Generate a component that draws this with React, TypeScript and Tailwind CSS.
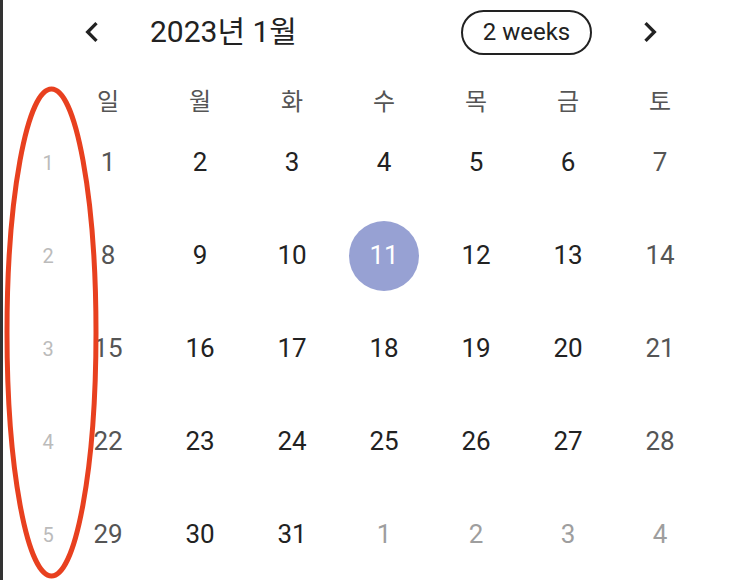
import React from "react";

const WEEKDAYS = ["일", "월", "화", "수", "목", "금", "토"];

type Day = { n: number; muted?: boolean };

const WEEKS: Day[][] = [
  [1, 2, 3, 4, 5, 6, 7].map((n) => ({ n })),
  [8, 9, 10, 11, 12, 13, 14].map((n) => ({ n })),
  [15, 16, 17, 18, 19, 20, 21].map((n) => ({ n })),
  [22, 23, 24, 25, 26, 27, 28].map((n) => ({ n })),
  [
    { n: 29 },
    { n: 30 },
    { n: 31 },
    { n: 1, muted: true },
    { n: 2, muted: true },
    { n: 3, muted: true },
    { n: 4, muted: true },
  ],
];

const SELECTED = 11;

function Chevron({ dir }: { dir: "left" | "right" }) {
  return (
    <svg width="40" height="40" viewBox="0 0 24 24" fill="#222">
      {dir === "left" ? (
        <path d="M15.41 7.41L14 6l-6 6 6 6 1.41-1.41L10.83 12z" />
      ) : (
        <path d="M8.59 16.59L10 18l6-6-6-6-1.41 1.41L13.17 12z" />
      )}
    </svg>
  );
}

export default function App() {
  return (
    <div
      className="relative w-[738px] h-[580px] overflow-hidden bg-white border-l-[3px] border-[#333]"
      style={{ fontFamily: 'Roboto, "Noto Sans CJK KR", sans-serif' }}
    >
      {/* header */}
      <div className="flex items-center h-[64px] pl-[69px] pr-[68px]">
        <div className="flex items-center justify-center w-[40px] h-[40px]">
          <Chevron dir="left" />
        </div>
        <div className="ml-[38px] text-[30px] text-[#222] leading-none">2023년 1월</div>
        <div className="flex-1" />
        <div className="flex items-center justify-center w-[131px] h-[45px] rounded-full border-2 border-[#222] text-[24px] text-[#222] leading-none">
          2 weeks
        </div>
        <div className="ml-[38px] flex items-center justify-center w-[40px] h-[40px]">
          <Chevron dir="right" />
        </div>
      </div>

      {/* weekday row */}
      <div className="flex h-[52px] pt-[24px] pl-[31px]">
        <div className="w-[28px]" />
        {WEEKDAYS.map((w) => (
          <div
            key={w}
            className="w-[92px] h-[28px] flex items-center justify-center text-[24px] text-[#555] leading-none"
          >
            {w}
          </div>
        ))}
      </div>

      {/* weeks */}
      {WEEKS.map((week, wi) => (
        <div key={wi} className="flex h-[93px] items-center pl-[31px]">
          <div className="w-[28px] text-center text-[20px] text-[#bbb]">{wi + 1}</div>
          {week.map((d, di) => {
            const isSel = !d.muted && d.n === SELECTED;
            const weekend = di === 0 || di === 6;
            const color = d.muted
              ? "text-[#9e9e9e]"
              : weekend
              ? "text-[#555]"
              : "text-[#222]";
            return (
              <div key={di} className="w-[92px] flex items-center justify-center">
                {isSel ? (
                  <div className="w-[70px] h-[70px] rounded-full bg-[#97a1d3] flex items-center justify-center text-[26px] text-white">
                    {d.n}
                  </div>
                ) : (
                  <span className={`text-[26px] ${color}`}>{d.n}</span>
                )}
              </div>
            );
          })}
        </div>
      ))}

      {/* annotation */}
      <svg
        className="absolute left-0 top-0 pointer-events-none"
        width="735"
        height="580"
        viewBox="3 0 735 580"
      >
        <ellipse cx="51.5" cy="332.5" rx="44.5" ry="243.5" fill="none" stroke="#e8401f" strokeWidth="5" />
      </svg>
    </div>
  );
}
